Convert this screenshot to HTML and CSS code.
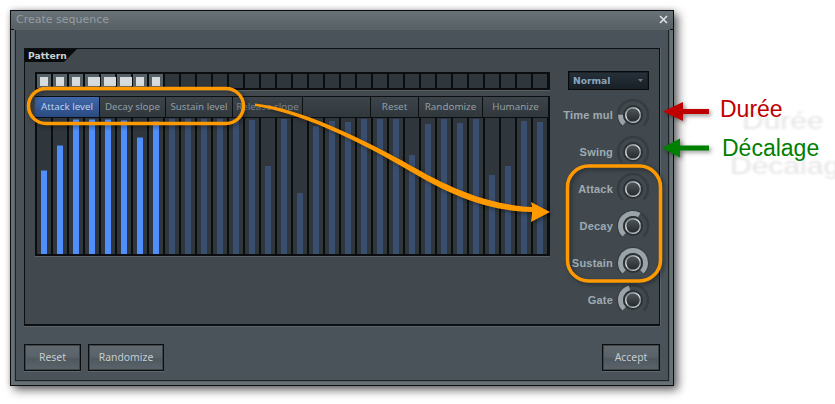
FILE: index.html
```html
<!DOCTYPE html>
<html lang="fr">
<head>
<meta charset="utf-8">
<title>Create sequence</title>
<link rel="stylesheet" href="styles.css">
</head>
<body>
<svg class="defs" width="0" height="0" aria-hidden="true">
  <defs>
    <linearGradient id="face" x1="0" y1="0" x2="0" y2="1"><stop offset="0" stop-color="#50575c"/><stop offset="1" stop-color="#24282b"/></linearGradient>
    <linearGradient id="rim" x1="0.2" y1="0" x2="0.8" y2="1"><stop offset="0" stop-color="#7f888d"/><stop offset="0.45" stop-color="#e4e8ea"/><stop offset="0.7" stop-color="#868f94"/><stop offset="1" stop-color="#d5dadc"/></linearGradient>
    <symbol id="cap" viewBox="0 0 34 34">
      <circle class="cap-well" cx="17" cy="17" r="10"/>
      <circle class="cap-face" cx="17" cy="17" r="7.300"/>
    </symbol>
  </defs>
</svg>
<main class="window">
  <header class="titlebar">
    <span class="title">Create sequence</span>
    <svg class="close" width="9" height="9" viewBox="0 0 9 9"><path d="M1 1 L8 8 M8 1 L1 8"/></svg>
  </header>
  <div class="inner">
    <section class="panel">
      <div class="panel-tab">Pattern</div>
      <div class="editor">
        <div class="steps">
          <i class="step on"><b></b></i><i class="step on"><b></b></i><i class="step on"><b></b></i><i class="step on"><b class="wide"></b></i><i class="step on"><b class="wide"></b></i><i class="step on"><b class="wide"></b></i><i class="step on"><b></b></i><i class="step on"><b></b></i>
          <i class="step"></i><i class="step"></i><i class="step"></i><i class="step"></i><i class="step"></i><i class="step"></i><i class="step"></i><i class="step"></i>
          <i class="step"></i><i class="step"></i><i class="step"></i><i class="step"></i><i class="step"></i><i class="step"></i><i class="step"></i><i class="step"></i>
          <i class="step"></i><i class="step"></i><i class="step"></i><i class="step"></i><i class="step"></i><i class="step"></i><i class="step"></i><i class="step"></i>
        </div>
        <div class="tabs">
          <div class="tab active">Attack level</div>
          <div class="tab">Decay slope</div>
          <div class="tab">Sustain level</div>
          <div class="tab dim">Release slope</div>
          <div class="tab"></div>
          <div class="tab">Reset</div>
          <div class="tab">Randomize</div>
          <div class="tab">Humanize</div>
        </div>
        <div class="bars">
          <div class="cell lit"><i style="height:84px"></i></div>
          <div class="cell lit"><i style="height:109px"></i></div>
          <div class="cell lit"><i style="height:135px"></i></div>
          <div class="cell lit"><i style="height:135px"></i></div>
          <div class="cell lit"><i style="height:135px"></i></div>
          <div class="cell lit"><i style="height:134px"></i></div>
          <div class="cell lit"><i style="height:117px"></i></div>
          <div class="cell lit"><i style="height:133px"></i></div>
          <div class="cell"><i style="height:135px"></i></div>
          <div class="cell"><i style="height:135px"></i></div>
          <div class="cell"><i style="height:135px"></i></div>
          <div class="cell"><i style="height:135px"></i></div>
          <div class="cell"><i style="height:135px"></i></div>
          <div class="cell"><i style="height:134px"></i></div>
          <div class="cell"><i style="height:88px"></i></div>
          <div class="cell"><i style="height:135px"></i></div>
          <div class="cell"><i style="height:61px"></i></div>
          <div class="cell"><i style="height:128px"></i></div>
          <div class="cell"><i style="height:133px"></i></div>
          <div class="cell"><i style="height:132px"></i></div>
          <div class="cell"><i style="height:135px"></i></div>
          <div class="cell"><i style="height:135px"></i></div>
          <div class="cell"><i style="height:135px"></i></div>
          <div class="cell"><i style="height:99px"></i></div>
          <div class="cell"><i style="height:130px"></i></div>
          <div class="cell"><i style="height:135px"></i></div>
          <div class="cell"><i style="height:131px"></i></div>
          <div class="cell"><i style="height:135px"></i></div>
          <div class="cell"><i style="height:79px"></i></div>
          <div class="cell"><i style="height:88px"></i></div>
          <div class="cell"><i style="height:133px"></i></div>
          <div class="cell"><i style="height:132px"></i></div>
        </div>
      </div>
      <aside class="controls">
        <div class="select"><span>Normal</span><svg width="5" height="3" viewBox="0 0 5 3"><path d="M0 0 H5 L2.500 3 Z"/></svg></div>
        <div class="knob-row"><label>Time mul</label>
          <svg class="knob" width="34" height="34" viewBox="0 0 34 34"><path class="track" d="M6.400 27.600 A15 15 0 1 1 27.600 27.600"/><path class="value v17" pathLength="100" d="M8.200 25.800 A12.500 12.500 0 1 1 25.800 25.800"/><use href="#cap"/></svg>
        </div>
        <div class="knob-row"><label>Swing</label>
          <svg class="knob" width="34" height="34" viewBox="0 0 34 34"><path class="track" d="M6.400 27.600 A15 15 0 1 1 27.600 27.600"/><use href="#cap"/></svg>
        </div>
        <div class="knob-row"><label>Attack</label>
          <svg class="knob" width="34" height="34" viewBox="0 0 34 34"><path class="track" d="M6.400 27.600 A15 15 0 1 1 27.600 27.600"/><use href="#cap"/></svg>
        </div>
        <div class="knob-row"><label>Decay</label>
          <svg class="knob" width="34" height="34" viewBox="0 0 34 34"><path class="track" d="M6.400 27.600 A15 15 0 1 1 27.600 27.600"/><path class="value v61" pathLength="100" d="M8.200 25.800 A12.500 12.500 0 1 1 25.800 25.800"/><use href="#cap"/></svg>
        </div>
        <div class="knob-row"><label>Sustain</label>
          <svg class="knob" width="34" height="34" viewBox="0 0 34 34"><path class="track" d="M6.400 27.600 A15 15 0 1 1 27.600 27.600"/><path class="value" pathLength="100" d="M8.200 25.800 A12.500 12.500 0 1 1 25.800 25.800"/><use href="#cap"/></svg>
        </div>
        <div class="knob-row"><label>Gate</label>
          <svg class="knob" width="34" height="34" viewBox="0 0 34 34"><path class="track" d="M6.400 27.600 A15 15 0 1 1 27.600 27.600"/><path class="value v44" pathLength="100" d="M8.200 25.800 A12.500 12.500 0 1 1 25.800 25.800"/><use href="#cap"/></svg>
        </div>
      </aside>
    </section>
    <footer class="footer">
      <div class="btn-group">
        <div class="btn reset">Reset</div>
        <div class="btn randomize">Randomize</div>
      </div>
      <div class="btn accept">Accept</div>
    </footer>
  </div>
</main>

<svg class="annotations" width="835" height="404" viewBox="0 0 835 404">
  <g class="shadowed">
    <path class="red" d="M663 111.500 L683 102 V109 H709 V114 H683 V121 Z"/>
    <path class="green" d="M662 148 L680 138.500 V145.500 H709 V150.500 H680 V157.500 Z"/>
    <rect class="ring" x="28.500" y="88.500" width="215" height="35" rx="17.500"/>
    <rect class="ring" x="567.500" y="166" width="93" height="115" rx="21"/>
    <path class="orange" d="M255 103.500 C300 108 360 138 402 160.500 C440 182.500 480 204 532 207 L531 202 L550 212 L531 222 L532 212 C480 211 440 189 401 166 C360 142 300 112.500 255 106 Z"/>
  </g>
</svg>
<span class="note duree" data-text="Durée">Durée</span>
<span class="note decalage" data-text="Décalage">Décalage</span>
</body>
</html>
```
FILE: styles.css
```css
* { box-sizing: border-box; }
html, body { margin: 0; padding: 0; }
body {
  width: 835px;
  height: 404px;
  overflow: hidden;
  position: relative;
  background: #fff;
  padding: 10px 0 0 10px;
  font-family: "Noto Sans", sans-serif;
}
.defs { position: absolute; }

.window {
  width: 664px;
  height: 376px;
  border: 1px solid #0b0d0e;
  background: #667075;
  box-shadow: 4px 4px 9px rgba(0, 0, 0, .6), 0 0 5px rgba(0, 0, 0, .2);
  display: flex;
  flex-direction: column;
}

.titlebar {
  height: 19px;
  flex: none;
  display: flex;
  align-items: center;
  justify-content: space-between;
  padding: 0 5px 1px 5px;
  background: linear-gradient(#697277, #566065);
  border-bottom: 1px solid #0b0d0e;
}
.title {
  font: 11px "DejaVu Sans", sans-serif;
  color: #959da1;
}
.close path { stroke: #dde1e3; stroke-width: 1.600; fill: none; }

.inner {
  flex: 1;
  margin: 0 4px 4px;
  background: #4a5359;
  border: 1px solid #1d2225;
  border-top: 0;
  padding: 18px 8px 0;
  display: flex;
  flex-direction: column;
  box-shadow: 0 0 0 1px #596368;
}

.panel {
  position: relative;
  height: 278px;
  flex: none;
  background: #41494f;
  border: 1px solid #0d1012;
  border-bottom-width: 2px;
  box-shadow: 0 1px 0 #5a6469, 1px 0 0 #5a6469;
  padding: 22px 0 0 10px;
  display: flex;
}
.panel-tab {
  position: absolute;
  left: 0;
  top: 0;
  width: 52px;
  height: 13px;
  padding-left: 3px;
  background: #0a0b0c;
  clip-path: polygon(0 0, 100% 0, 75% 100%, 0 100%);
  font: 600 9.200px/13px "DejaVu Sans", sans-serif;
  color: #c9d0d4;
}

.editor { width: 515px; flex: none; margin-top: 1px; }

.steps {
  height: 18px;
  background: #0b0d0e;
  padding: 2px;
  display: flex;
  gap: 2px;
  box-shadow: 0 1px 0 #596267;
}
.step {
  width: 14px;
  height: 14px;
  background: #2f373c;
  padding: 3px;
  display: block;
}
.step.on { background: #566067; }
.step b { display: block; width: 8px; height: 9px; background: #d6dbde; }
.step b.wide { width: 12px; }

.tabs {
  margin-top: 6px;
  height: 21px;
  padding-top: 1px;
  background: #0d1012;
  display: grid;
  grid-template-columns: 64px 65px 66px 69px 67px 47px 63px 65px;
  gap: 1px;
}
.tab {
  height: 20px;
  background: linear-gradient(#3c444a, #31383d);
  font-size: 9.800px;
  line-height: 19px;
  text-align: center;
  color: #939da3;
  white-space: nowrap;
  overflow: hidden;
}
.tab.active {
  background: linear-gradient(#3f68ab, #2b4a80);
  color: #bcd4f2;
}
.tab.dim { color: #7a848a; }

.bars {
  height: 139px;
  background: #0b0d0e;
  padding: 1px 2px 2px;
  display: flex;
  gap: 2px;
  box-shadow: 0 1px 0 #596267;
}
.cell {
  width: 14px;
  background: #30373c;
  display: flex;
  align-items: flex-end;
  justify-content: center;
}
.cell i { display: block; width: 6px; background: #3a4f70; }
.cell.lit i { background: #4f8efb; border-top: 1px solid #3f6098; }

.controls {
  width: 81px;
  margin-left: 18px;
  display: flex;
  flex-direction: column;
  flex: none;
}
.select {
  height: 19px;
  background: linear-gradient(#27313a, #181f25);
  border: 1px solid #08090a;
  outline: 1px solid #1b2024;
  outline-offset: -2px;
  padding: 0 5px 0 4px;
  display: flex;
  align-items: center;
  justify-content: space-between;
  font: 700 9.200px "DejaVu Sans", sans-serif;
  color: #8ba4bc;
  margin-bottom: 6px;
}
.select svg path { fill: #6f7a82; }
.knob-row {
  height: 37px;
  flex: none;
  display: flex;
  align-items: center;
  justify-content: flex-end;
  gap: 2px;
  margin-right: -1px;
  white-space: nowrap;
}
.knob-row label {
  font: 700 11px "Liberation Sans", sans-serif;
  letter-spacing: .2px;
  margin-right: 1px;
  color: #9fabb2;
}
.knob { flex: none; }
.track {
  fill: none;
  stroke: #363d42;
  stroke-width: 2.500;
}
.value {
  fill: none;
  stroke: #99a3a8;
  stroke-width: 5;
  stroke-dasharray: 100 100;
}
.value.v17 { stroke-dasharray: 17 100; }
.value.v61 { stroke-dasharray: 61 100; }
.value.v44 { stroke-dasharray: 44 100; }
.cap-well { fill: #2b3135; }
.cap-face {
  fill: url(#face);
  stroke: url(#rim);
  stroke-width: 1.500;
}

.footer {
  margin-top: 18px;
  display: flex;
  justify-content: space-between;
  align-items: flex-start;
}
.btn-group { display: flex; gap: 7px; }
.btn {
  height: 27px;
  background: linear-gradient(#606a70, #586268 48%, #4f585e 55%, #5a646a);
  border: 1px solid #0b0d0e;
  box-shadow: inset 0 0 0 1px #3d454a, 0 1px 0 #5f696e;
  font-size: 10.400px;
  line-height: 25px;
  text-align: center;
  color: #c5cdd1;
}
.btn.reset { width: 57px; }
.btn.randomize { width: 76px; }
.btn.accept { width: 58px; }

.annotations {
  position: absolute;
  left: 0;
  top: 0;
  pointer-events: none;
}
.shadowed { filter: drop-shadow(2px 2px 2px rgba(0, 0, 0, .4)); }
.red { fill: #c00000; }
.green { fill: #008000; }
.ring { fill: none; stroke: #ff9900; stroke-width: 3.500; }
.orange { fill: #ff9900; }

.note {
  position: absolute;
  font: 23px/26px "Liberation Sans", sans-serif;
  white-space: nowrap;
}
.note::after {
  content: attr(data-text);
  position: absolute;
  font-size: 30px;
  color: rgba(0, 0, 0, .11);
  filter: blur(1.500px);
  transform: scaleY(.8);
}
.duree { left: 720px; top: 96px; color: #c00000; }
.duree::after { left: 22px; top: 12px; }
.decalage { left: 722px; top: 135px; color: #008000; }
.decalage::after { left: 8px; top: 18px; }
```
